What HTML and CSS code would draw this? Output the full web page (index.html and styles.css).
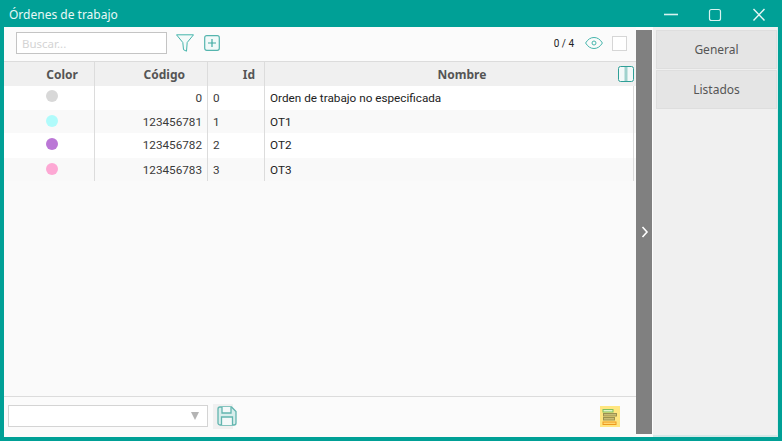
FILE: index.html
```html
<!DOCTYPE html>
<html lang="es">
<head>
<meta charset="utf-8">
<title>Órdenes de trabajo</title>
<link rel="stylesheet" href="styles.css">
</head>
<body>
<div class="window">
  <header class="titlebar">
    <span class="title">Órdenes de trabajo</span>
    <div class="winbtns">
      <svg class="winbtn" width="44" height="27" viewBox="0 0 44 27"><path d="M15 14.500h14" stroke="#d8f3f0" stroke-width="1.600"/></svg>
      <svg class="winbtn" width="44" height="27" viewBox="0 0 44 27"><rect x="16.500" y="9.500" width="11" height="11" rx="2" fill="none" stroke="#d8f3f0" stroke-width="1.200"/></svg>
      <svg class="winbtn" width="44" height="27" viewBox="0 0 44 27"><path d="M16.500 9l11 11.500M27.500 9l-11 11.500" stroke="#e6f7f5" stroke-width="1.400" fill="none"/></svg>
    </div>
  </header>
  <div class="body">
    <main class="main">
      <div class="toolbar">
        <div class="search">Buscar...</div>
        <svg class="ico-filter" width="18" height="18" viewBox="0 0 18 18"><path d="M.5 .8h17l-6.300 7.700-.7 8.700-3-1.500-.7-7.200z" fill="#f4fbfa" stroke="#45b5ac" stroke-width="1" stroke-linejoin="round"/></svg>
        <svg class="ico-add" width="16" height="16" viewBox="0 0 16 16"><rect x=".7" y=".7" width="14.600" height="14.600" rx="2" fill="#f2faf9" stroke="#55b5ae" stroke-width="1.200"/><path d="M8 4v8M4 8h8" stroke="#3eaaa2" stroke-width="1.200"/></svg>
        <span class="count">0 / 4</span>
        <svg class="ico-eye" width="18" height="14" viewBox="0 0 18 14"><path d="M.6 7C2.800 3.300 5.600 1.500 9 1.500s6.200 1.800 8.400 5.500c-2.200 3.700-5 5.500-8.400 5.500S2.800 10.700 .6 7z" fill="none" stroke="#45b5ac" stroke-width="1"/><circle cx="9" cy="7" r="2" fill="none" stroke="#45b5ac" stroke-width="1"/></svg>
        <span class="check"></span>
      </div>
      <div class="table">
        <div class="row head">
          <div class="cell c-color">Color</div>
          <div class="cell c-code">Código</div>
          <div class="cell c-id">Id</div>
          <div class="cell c-name">Nombre</div>
          <svg class="ico-cols" width="16" height="16" viewBox="0 0 16 16"><rect x=".5" y=".5" width="15" height="15" rx="2" fill="#f3f9f9" stroke="#2f9f97"/><rect x="6.500" y="1" width="3" height="14" fill="#9fd2cd"/></svg>
        </div>
        <div class="row">
          <div class="cell c-color"><span class="dot dot-grey"></span></div>
          <div class="cell c-code">0</div>
          <div class="cell c-id">0</div>
          <div class="cell c-name">Orden de trabajo no especificada</div>
        </div>
        <div class="row alt">
          <div class="cell c-color"><span class="dot dot-cyan"></span></div>
          <div class="cell c-code">123456781</div>
          <div class="cell c-id">1</div>
          <div class="cell c-name">OT1</div>
        </div>
        <div class="row">
          <div class="cell c-color"><span class="dot dot-purple"></span></div>
          <div class="cell c-code">123456782</div>
          <div class="cell c-id">2</div>
          <div class="cell c-name">OT2</div>
        </div>
        <div class="row alt">
          <div class="cell c-color"><span class="dot dot-pink"></span></div>
          <div class="cell c-code">123456783</div>
          <div class="cell c-id">3</div>
          <div class="cell c-name">OT3</div>
        </div>
      </div>
      <div class="footer">
        <div class="select"><span class="arrow"></span></div>
        <span class="save">
          <svg width="20" height="20" viewBox="0 0 20 20"><path d="M1 3a2 2 0 0 1 2-2h11.500L19 5.500V17a2 2 0 0 1-2 2H3a2 2 0 0 1-2-2z" fill="#d8eeec" stroke="#62b5af" stroke-width="1.300"/><path d="M5 1v6h9V1M4.500 19v-8h11v8" fill="#f4f9f9" stroke="#62b5af" stroke-width="1.300"/></svg>
        </span>
        <span class="report">
          <svg width="20" height="21" viewBox="0 0 20 21"><rect width="20" height="21" fill="#ffe680"/><rect x="3" y="3.500" width="10" height="2.500" fill="#e2f5c8" stroke="#7cbf62"/><rect x="3.500" y="7.500" width="13" height="2.500" fill="#c9bd75" stroke="#9c9150"/><rect x="3.500" y="11.500" width="11" height="2.500" fill="#c9bd75" stroke="#9c9150"/><rect x="3" y="16" width="13" height="2.500" fill="#ffd870" stroke="#ee9a1e"/></svg>
        </span>
      </div>
    </main>
    <div class="collapse">
      <svg width="8" height="12" viewBox="0 0 8 12"><path d="M1.500 1l4.500 5-4.500 5" fill="none" stroke="#fff" stroke-width="1.600"/></svg>
    </div>
    <aside class="side">
      <div class="tab">General</div>
      <div class="tab">Listados</div>
    </aside>
  </div>
</div>
</body>
</html>
```
FILE: styles.css
```css
* { box-sizing: border-box; }
html, body { margin: 0; padding: 0; }
body { width: 782px; height: 441px; overflow: hidden; font-family: "Roboto", sans-serif; }
.window { width: 782px; height: 441px; background: #00a096; padding: 0 4px 4px 4px; display: flex; flex-direction: column; }
.titlebar { height: 27px; flex: none; display: flex; align-items: center; justify-content: space-between; margin-right: -4px; }
.title { font: 12px "Noto Sans", sans-serif; color: #e8f8f6; margin-left: 5px; position: relative; top: 1px; }
.winbtns { display: flex; margin-right: 1px; }
.winbtn { display: block; }
.body { flex: 1; display: flex; min-height: 0; background: #fdfdfd; }
.main { width: 632px; flex: none; display: flex; flex-direction: column; background: #fafafa; }
.toolbar { height: 34px; flex: none; display: flex; align-items: center; padding: 0 9px 2px 12px; background: #fbfbfb; }
.search { width: 151px; height: 22px; border: 1px solid #c4c4c4; background: #fff; font: 11.500px "Noto Sans", sans-serif; color: #d4d4d4; padding: 3px 5px; }
.ico-filter { margin-left: 9px; }
.ico-add { margin-left: 10px; }
.count { margin-left: auto; font: 10px "Roboto", sans-serif; color: #222; }
.ico-eye { margin-left: 11px; }
.check { width: 15px; height: 15px; margin-left: 9px; border: 1px solid #d6d6d6; background: #fff; }
.table { flex: none; }
.row { height: 24px; display: flex; background: #fff; position: relative; font-size: 11.730px; color: #3a3a3a; }
.row:nth-child(3), .row:nth-child(5) { height: 23px; }
.row:nth-child(4) { height: 25px; }
.row.alt { background: #f9f9f9; }
.row.head { height: 25px; background: #f0f0f0; border-top: 1px solid #dcdcdc; font: 700 12px "Noto Sans", sans-serif; color: #555; }
.cell { display: flex; align-items: center; border-right: 1px solid #dcdcdc; flex: none; }
.row:nth-child(3) .cell, .row:nth-child(5) .cell { padding-top: 1px; }
.row:nth-child(4) .cell { padding-bottom: 1px; }
.c-color { width: 91px; justify-content: flex-end; padding-right: 16px; }
.row:not(.head) .c-color { justify-content: flex-start; align-items: flex-start; padding: 5px 0 0 42px; }
.row:nth-child(2) .c-color { padding-top: 4px; }
.c-code { width: 113px; justify-content: flex-end; padding-right: 5px; }
.head .c-code { padding-right: 22px; }
.c-id { width: 57px; padding-left: 5px; }
.head .c-id { justify-content: flex-end; padding: 0 9px 0 0; }
.c-name { width: 369px; padding-left: 5px; color: #222; }
.head .c-name { justify-content: center; color: #555; padding: 0 0 0 25px; border-right: 0; }
.ico-cols { position: absolute; right: 2px; top: 4px; }
.dot { width: 12px; height: 12px; border-radius: 50%; display: block; }
.dot-grey { background: #d8d8d8; }
.dot-cyan { background: #b0fbfb; }
.dot-purple { background: #bb77d6; }
.dot-pink { background: #fda8d4; }
.footer { margin-top: auto; height: 41px; flex: none; border-top: 1px solid #dcdcdc; display: flex; align-items: center; padding: 0 16px 2px 4px; background: #fbfbfb; }
.select { width: 200px; height: 22px; border: 1px solid #d4d4d4; background: #fff; position: relative; display: flex; align-items: center; justify-content: flex-end; padding-right: 8px; }
.arrow { width: 0; height: 0; border-left: 4.500px solid transparent; border-right: 4.500px solid transparent; border-top: 8px solid #b4b4b4; }
.save { width: 20px; height: 25px; margin-left: 5px; background: #f0f0f0; display: flex; align-items: center; }
.save svg { margin-left: 4px; flex: none; }
.report { margin-left: auto; display: block; height: 21px; }
.report svg, .save svg { display: block; }
.collapse { width: 16px; flex: none; margin: 3px 0 3px 0; background: #808080; display: flex; align-items: center; justify-content: center; padding-left: 2px; }
.side { flex: 1; margin-left: 1px; background: #f0f0f0; padding: 3px 0 0 3px; border-right: 1px solid #dceeee; border-bottom: 2px solid #d4e8e7; display: flex; flex-direction: column; gap: 1px; }
.tab { height: 39px; background: #e5e5e5; border: 1px solid #dedede; display: flex; align-items: center; justify-content: center; font: 12px "Noto Sans", sans-serif; color: #555; }
```
